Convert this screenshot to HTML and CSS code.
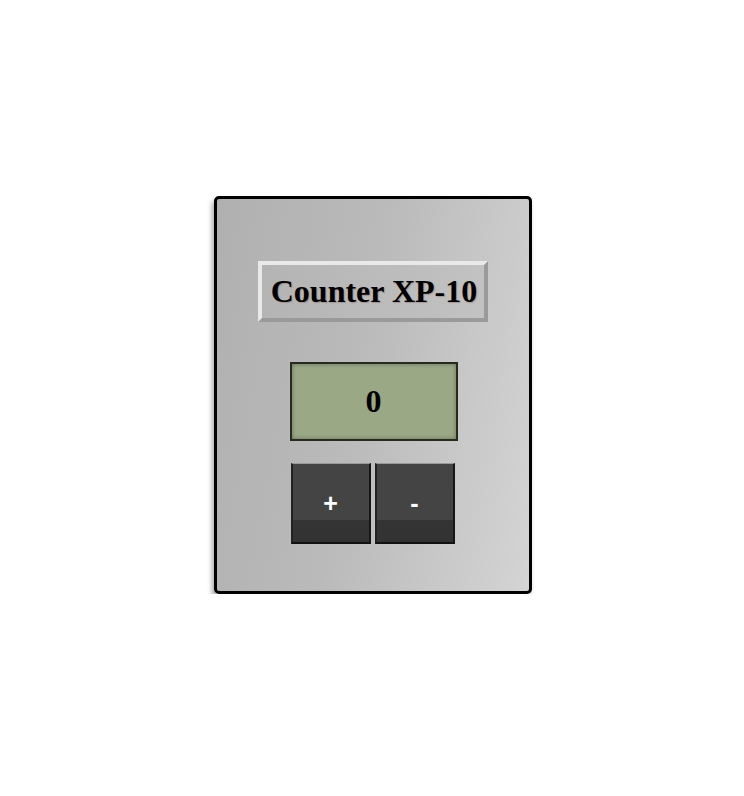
FILE: index.html
```html
<!DOCTYPE html>
<html>
<head>
<meta charset="utf-8">
<link rel="stylesheet" href="styles.css">
</head>
<body>
<div class="page">
  <div class="device">
    <div class="title">Counter XP-10</div>
    <div class="display">0</div>
    <div class="keys">
      <button class="key">+</button>
      <button class="key">-</button>
    </div>
  </div>
</div>
</body>
</html>
```
FILE: styles.css
```css
html, body {
  margin: 0;
  padding: 0;
  background: #fff;
}
.page {
  padding-top: 196px;
  padding-left: 1px;
  display: flex;
  justify-content: center;
}
.device {
  box-sizing: border-box;
  width: 318px;
  height: 398px;
  border: 3px solid #000;
  border-radius: 5px;
  background: linear-gradient(100deg, #b0b0b0 0%, #bababa 45%, #d4d4d4 100%);
  box-shadow: -2px 4px 5px rgba(0, 0, 0, 0.35);
  display: flex;
  flex-direction: column;
  align-items: center;
  padding-top: 62px;
}
.title {
  box-sizing: border-box;
  width: 230px;
  height: 61px;
  border: 4px solid;
  border-color: #e9e9e9 #9a9a9a #9a9a9a #e9e9e9;
  background: linear-gradient(90deg, #b4b4b4, #c2c2c2);
  font-family: "Liberation Serif", serif;
  font-weight: bold;
  font-size: 32px;
  color: #000;
  text-shadow: 1px 1px 1px rgba(90, 30, 20, 0.25);
  display: flex;
  align-items: center;
  justify-content: center;
  padding-left: 3px;
}
.display {
  box-sizing: border-box;
  margin-top: 40px;
  margin-left: 2px;
  width: 168px;
  height: 79px;
  border: 2px solid #262b20;
  background: #9aa886;
  box-shadow: inset 0 0 4px rgba(0, 0, 0, 0.35);
  font-family: "Liberation Serif", serif;
  font-weight: bold;
  font-size: 32px;
  color: #000;
  display: flex;
  align-items: center;
  justify-content: center;
}
.keys {
  margin-top: 22px;
  display: flex;
  gap: 4px;
}
.key {
  box-sizing: border-box;
  width: 80px;
  height: 81px;
  padding: 0;
  margin: 0;
  border-style: solid;
  border-width: 1px 2px 2px 2px;
  border-color: #9a9a9a #161616 #111 #222;
  background: linear-gradient(#444 0%, #444 72%, #343434 72%, #333 100%);
  color: #fff;
  font-family: "Liberation Sans", Arial, sans-serif;
  font-weight: bold;
  font-size: 25px;
  display: flex;
  align-items: center;
  justify-content: center;
}
```
